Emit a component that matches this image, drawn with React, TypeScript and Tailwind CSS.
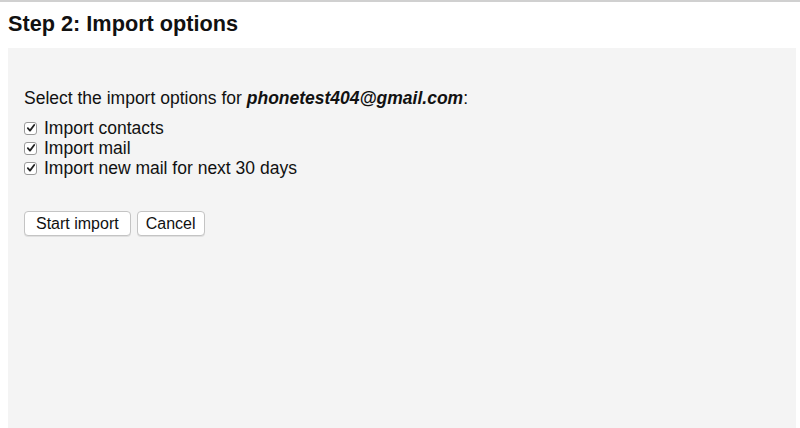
function Check({ label }: { label: string }) {
  return (
    <label className="flex items-center h-5">
      <span className="mr-[7px] flex h-[13px] w-[13px] items-center justify-center rounded-[3px] border border-[#9a9a9a] bg-white">
        <svg viewBox="0 0 10 10" className="h-[10px] w-[10px]">
          <path d="M1.8 5.2 L4 7.6 L8.2 2" fill="none" stroke="#222" strokeWidth="1.8" strokeLinecap="round" strokeLinejoin="round" />
        </svg>
      </span>
      <span>{label}</span>
    </label>
  )
}

export default function App() {
  return (
    <div className="h-[428px] w-[800px] overflow-hidden bg-white font-['Liberation_Sans',Arial,sans-serif] text-[#111]">
      <div className="border-t-2 border-[#d0d0d0]" />
      <h2 className="px-2 pt-[10px] text-[21.7px] font-bold leading-6">Step 2: Import options</h2>
      <div className="ml-2 mr-1 mt-[12px] h-[400px] bg-[#f4f4f4] px-4 pt-[40px] text-[17.5px]">
        <p className="leading-5">
          Select the import options for <b className="italic">phonetest404@gmail.com</b>:
        </p>
        <div className="mt-[10px]">
          <Check label="Import contacts" />
          <Check label="Import mail" />
          <Check label="Import new mail for next 30 days" />
        </div>
        <div className="mt-[33px] flex gap-[6px] text-[16px]">
          <button className="h-[25px] rounded-[4px] border border-[#c4c4c4] bg-white px-[11px] leading-none shadow-[0_1px_0_rgba(0,0,0,0.08)]">Start import</button>
          <button className="h-[25px] rounded-[4px] border border-[#c4c4c4] bg-white px-[8px] leading-none shadow-[0_1px_0_rgba(0,0,0,0.08)]">Cancel</button>
        </div>
      </div>
    </div>
  )
}
